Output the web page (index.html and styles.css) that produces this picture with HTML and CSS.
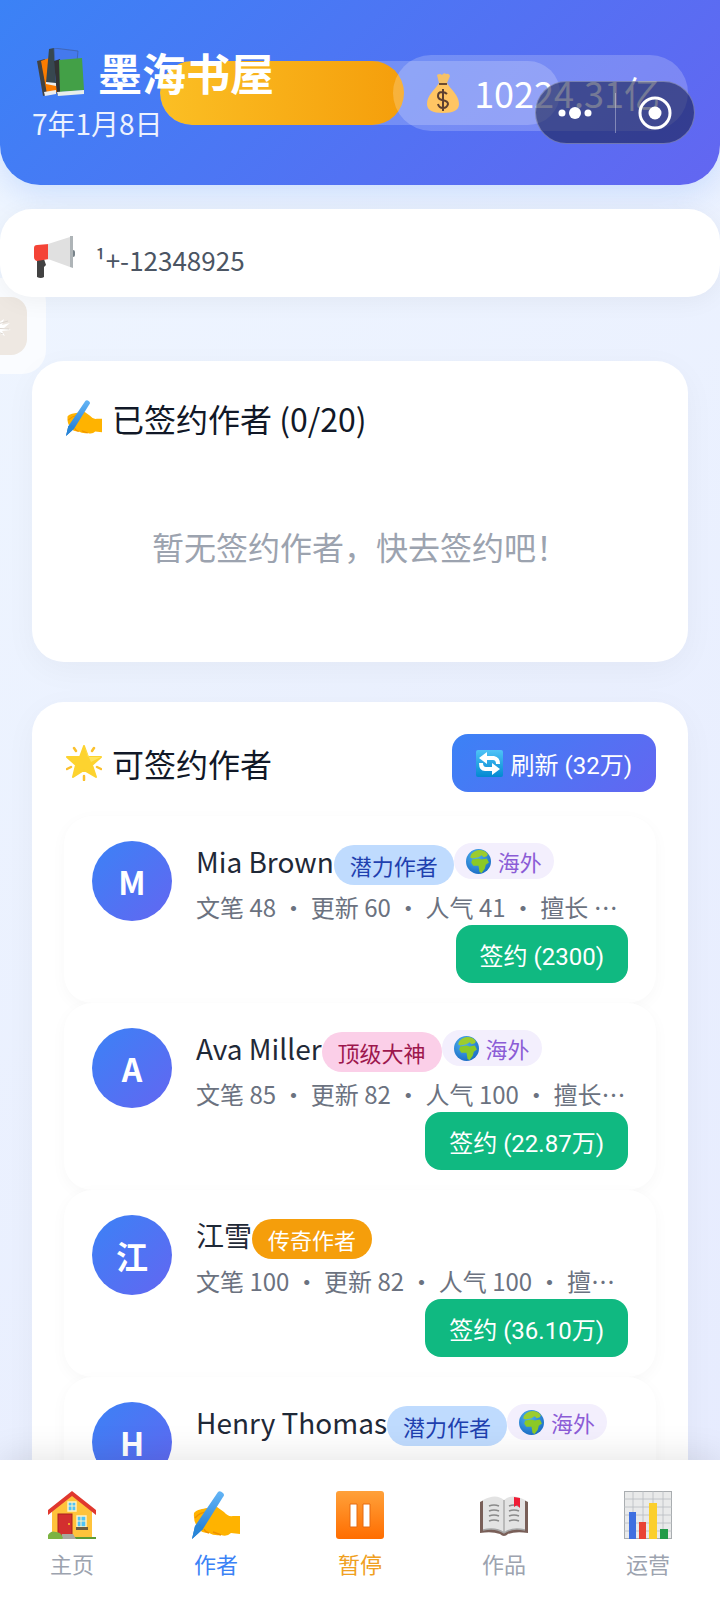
FILE: index.html
```html
<!DOCTYPE html>
<html lang="zh-CN">
<head>
    <meta charset="UTF-8">
    <meta name="viewport" content="width=device-width, initial-scale=1.0">
    <title>墨海书屋</title>
    <link rel="stylesheet" href="styles.css">
</head>
<body>
    <!-- shared icons -->
    <svg class="sprite" aria-hidden="true">
        <defs>
            <linearGradient id="gPen" x1="0" y1="0" x2="0" y2="1">
                <stop offset="0" stop-color="#64b5f6"/><stop offset="1" stop-color="#1976d2"/>
            </linearGradient>
            <linearGradient id="gBlue" x1="0" y1="0" x2="0" y2="1">
                <stop offset="0" stop-color="#4fc3f7"/><stop offset="1" stop-color="#0288d1"/>
            </linearGradient>
            <radialGradient id="gSea" cx="0.4" cy="0.3" r="0.8">
                <stop offset="0" stop-color="#4fb3f0"/><stop offset="1" stop-color="#1565c0"/>
            </radialGradient>
        </defs>
        <symbol id="hand" viewBox="0 0 48 48">
            <path d="M2 22C5 18 11 18 15 17L25 16L32 21Q36 26 41 25L48 25V43L39 42Q35 46 29 44Q22 45 17 42Q9 42 7 38Q1 32 2 22Z" fill="#ffb300"/>
            <path d="M3 27Q9 20 18 21M17 42Q13 41 12 38M29 44Q24 42 21 41" fill="none" stroke="#ef9100" stroke-width="1.4"/>
            <path d="M26 1Q28-1 31 2Q33 4 31 6L11 38L0 48L3 35Z" fill="url(#gPen)"/>
            <path d="M3 35L8 33L11 38L0 48Z" fill="#2986d8"/>
            <path d="M22 26L28 21L32 29Q26 35 17 33Z" fill="#ffb300"/>
        </symbol>
        <symbol id="earth" viewBox="0 0 24 24">
            <circle cx="12" cy="12" r="12" fill="url(#gSea)"/>
            <path d="M5 5Q9 1 13 1Q18 1 21 5L20 7L17 8L15 6L12 8L6 9L4 8Z" fill="#9ccc2e"/>
            <path d="M6 10L12 9L15 10L20 9L22 13L19 15L18 19L15 23L13 22L12 16L7 16L5 13Z" fill="#8bc926"/>
        </symbol>
    </svg>

    <div class="scroll">
        <header class="header">
            <div class="quota"><div class="quota_fill"></div></div>
            <div class="brand">
                <h1>
                    <svg class="icon_title" viewBox="0 0 48 48" aria-hidden="true">
                        <path d="M1 13L9 11L19 44L7 48Z" fill="#424242"/>
                        <path d="M5 13L13 10L22 44L11 46Z" fill="#fb7c00"/>
                        <path d="M13 1L18 0L20 35H10Z" fill="#37474f"/>
                        <path d="M18 0L42 3L41 14L20 34Z" fill="#4479ee" stroke="#3f5f9d" stroke-width="0.7"/>
                        <path d="M10 34L20 35V38L10 36ZM8 44L20 42V46L9 48Z" fill="#eee"/>
                        <path d="M18 13L24 11L26 43L21 47Z" fill="#333"/>
                        <path d="M23 12L46 10L48 42L24 44Z" fill="#43a047"/>
                        <path d="M21 44L48 42V46L22 48Z" fill="#e8eeea"/>
                    </svg>
                    墨海书屋
                </h1>
                <p class="date">7年1月8日</p>
            </div>
            <div class="money">
                <svg class="icon_money" viewBox="0 0 32 40" aria-hidden="true">
                    <path d="M10 2Q13 0 15 2Q17-1 19 1Q22 0 23 3L20 10H12Z" fill="#f5c168"/>
                    <path d="M12 10H20C24 17 32 22 32 31Q32 40 16 40Q0 40 0 31C0 22 8 17 12 10Z" fill="#ffc563"/>
                    <path d="M12 11H20" stroke="#6d4c2f" stroke-width="2"/>
                    <path d="M20 21Q18 19 15 19Q11 19 11 23Q11 26 15 27Q21 28 21 31Q20 35 16 35Q12 35 11 31M16 16V38" fill="none" stroke="#5d4030" stroke-width="2"/>
                </svg>
                <span>10224.31亿</span>
            </div>
            <div class="capsule">
                <button type="button" aria-label="更多">
                    <svg width="34" height="14" viewBox="0 0 34 14"><circle cx="4" cy="7" r="3.5" fill="#fff"/><circle cx="17" cy="7" r="6" fill="#fff"/><circle cx="30" cy="7" r="3.5" fill="#fff"/></svg>
                </button>
                <span class="capsule_line"></span>
                <button type="button" aria-label="关闭">
                    <svg width="34" height="34" viewBox="0 0 34 34"><circle cx="17" cy="17" r="15" fill="none" stroke="#fff" stroke-width="3"/><circle cx="17" cy="17" r="6.5" fill="#fff"/></svg>
                </button>
            </div>
        </header>

        <div class="notice">
            <svg class="icon_notice" viewBox="0 0 42 42" aria-hidden="true">
                <path d="M4 23H11L13 29L11 31V41Q8 43 4 41Z" fill="#424242"/>
                <rect x="37" y="14" width="5" height="7" rx="2" fill="#78838a"/>
                <path d="M1 12Q1 9 4 9L16 8V23L4 25Q1 24 1 21Z" fill="#f44336"/>
                <path d="M15 8L37 1V31L15 23Z" fill="#e0e0e0"/>
                <path d="M37 0L40 0V32L37 31Z" fill="#aeb4b7"/>
            </svg>
            <p class="notice_text">¹+-12348925</p>
        </div>
        <button type="button" class="float_btn" aria-label="活动">
            <span class="float_inner">
                <svg width="22" height="24" viewBox="0 0 22 24"><path d="M0 7L6 3L8 9L14 5L12 11L20 9L14 14L21 16L12 17L15 22L7 18L2 22L0 20Z" fill="#fff"/><path d="M1 12L18 7M2 14L19 15M5 17L13 20" stroke="#dcd6d0" fill="none"/></svg>
            </span>
        </button>

        <main>
            <section class="card">
                <h2><svg class="icon_card" aria-hidden="true"><use href="#hand"/></svg>已签约作者 (0/20)</h2>
                <p class="empty">暂无签约作者，快去签约吧！</p>
            </section>

            <section class="card">
                <div class="card_head">
                    <h2>
                        <svg class="icon_card" viewBox="0 0 36 36" aria-hidden="true">
                            <path d="M18 1L22 12L35 12L26 20L30 32L18 25L7 32L10 20L1 12L14 12Z" fill="#fdd32f" stroke="#fdd32f" stroke-width="2" stroke-linejoin="round"/>
                            <path d="M18 1L22 12L35 12L25 17Z" fill="#ffe45c"/>
                            <path d="M8 3L10 6M28 3L26 6M1 24L5 22M35 24L31 22M18 31V35" stroke="#fbc02d" stroke-width="2.5" stroke-linecap="round"/>
                        </svg>
                        可签约作者
                    </h2>
                    <button type="button" class="btn btn_refresh">
                        <svg class="icon_refresh" viewBox="0 0 27 27" aria-hidden="true">
                            <rect width="27" height="27" rx="2" fill="url(#gBlue)"/>
                            <path d="M3 8L11 2V6H18Q24 7 24 14H20Q20 10 17 10H11V14Z" fill="#fff"/>
                            <path d="M24 19L16 13V17H10Q7 17 7 13H3Q3 21 9 21H16V25Z" fill="#fff"/>
                        </svg>
                        刷新 (32万)
                    </button>
                </div>

                <article class="author">
                    <div class="avatar">M</div>
                    <div class="info">
                        <div class="name"><h3>Mia Brown</h3><span class="level potential">潜力作者</span><span class="oversea"><svg class="icon_earth" aria-hidden="true"><use href="#earth"/></svg>海外</span></div>
                        <p class="stats">文笔 48 ・ 更新 60 ・ 人气 41 ・ 擅长 ⋯</p>
                        <button type="button" class="btn btn_sign">签约 (2300)</button>
                    </div>
                </article>

                <article class="author">
                    <div class="avatar">A</div>
                    <div class="info">
                        <div class="name"><h3>Ava Miller</h3><span class="level top">顶级大神</span><span class="oversea"><svg class="icon_earth" aria-hidden="true"><use href="#earth"/></svg>海外</span></div>
                        <p class="stats">文笔 85 ・ 更新 82 ・ 人气 100 ・ 擅长⋯</p>
                        <button type="button" class="btn btn_sign">签约 (22.87万)</button>
                    </div>
                </article>

                <article class="author">
                    <div class="avatar">江</div>
                    <div class="info">
                        <div class="name"><h3>江雪</h3><span class="level legend">传奇作者</span></div>
                        <p class="stats">文笔 100 ・ 更新 82 ・ 人气 100 ・ 擅⋯</p>
                        <button type="button" class="btn btn_sign">签约 (36.10万)</button>
                    </div>
                </article>

                <article class="author">
                    <div class="avatar">H</div>
                    <div class="info">
                        <div class="name"><h3>Henry Thomas</h3><span class="level potential">潜力作者</span><span class="oversea"><svg class="icon_earth" aria-hidden="true"><use href="#earth"/></svg>海外</span></div>
                    </div>
                </article>
            </section>
        </main>
    </div>

    <nav class="tabbar">
        <a href="#home">
            <svg viewBox="0 0 48 48" aria-hidden="true">
                <path d="M4 20L24 3L44 20V47H4Z" fill="#ffc33b"/>
                <path d="M24 0L48 19V24L24 5L0 24V19Z" fill="#e0382e"/>
                <rect x="10" y="23" width="14" height="22" fill="#d32f2f" stroke="#a92020"/>
                <circle cx="21" cy="33" r="1" fill="#ffca28"/>
                <path d="M20 11H28V20H20ZM29 25H38V36H29Z" fill="#4fc3f7" stroke="#fff3c4" stroke-width="1.4"/>
                <path d="M24 11V20M20 15H28M33 25V36M29 30H38" stroke="#fff3c4"/>
                <path d="M28 36H40V39H28Z" fill="#6d5b3f"/>
                <path d="M0 46H48V48H0Z" fill="#5d9b34"/>
                <path d="M14 43H25L28 48H13Z" fill="#a8a8a0"/>
                <path d="M0 48V44Q3 39 8 41Q13 41 15 47L14 48Z" fill="#7cb342"/>
            </svg>
            主页
        </a>
        <a href="#authors" class="active">
            <svg aria-hidden="true"><use href="#hand"/></svg>
            作者
        </a>
        <a href="#pause" class="pause">
            <svg viewBox="0 0 48 48" aria-hidden="true">
                <defs><linearGradient id="gPause" x1="0" y1="0" x2="0" y2="1"><stop offset="0" stop-color="#ffa13a"/><stop offset="1" stop-color="#ff6d00"/></linearGradient></defs>
                <rect width="48" height="48" rx="3" fill="url(#gPause)"/>
                <path d="M14 13H21V36H14ZM27 13H34V36H27Z" fill="#fff" stroke="#e66a10"/>
            </svg>
            暂停
        </a>
        <a href="#works">
            <svg viewBox="0 0 48 48" aria-hidden="true">
                <path d="M0 11L4 9H44L48 11V42Q36 40 28 43Q24 47 20 43Q12 40 0 42Z" fill="#795f58"/>
                <path d="M3 9Q16 2 24 9Q32 2 45 9V39Q32 36 24 42Q16 36 3 39Z" fill="#e3e3e3"/>
                <path d="M3 39Q16 36 24 42Q32 36 45 39M24 9V41" fill="none" stroke="#a5a5a5" stroke-width="1.3"/>
                <path d="M9 15Q14 13 19 15M9 20Q14 18 19 20M9 25Q14 23 19 25M9 30Q14 28 19 30M29 15Q34 13 39 15M29 20Q34 18 39 20M29 25Q34 23 39 25M29 30Q34 28 39 30" fill="none" stroke="#8a8a8a" stroke-width="1.6"/>
                <path d="M34 6L40 7V17L37 14L34 16Z" fill="#f01c35"/>
            </svg>
            作品
        </a>
        <a href="#operate">
            <svg viewBox="0 0 48 48" aria-hidden="true">
                <rect width="48" height="48" fill="#e9eaea" stroke="#a9adb0" stroke-width="2"/>
                <path d="M9 0V48M19 0V48M29 0V48M39 0V48M0 8H48M0 16H48M0 24H48M0 32H48M0 40H48" stroke="#b8bdc1" stroke-width="0.8"/>
                <path d="M5 21H12V48H5Z" fill="#3f6fe0"/>
                <path d="M15 31H22V48H15Z" fill="#e94335"/>
                <path d="M25 12H33V48H25Z" fill="#fbcf2c"/>
                <path d="M36 38H44V48H36Z" fill="#219b48"/>
            </svg>
            运营
        </a>
    </nav>
</body>
</html>
```
FILE: styles.css
```css
* {
    box-sizing: border-box;
    margin: 0;
    padding: 0;
}
body {
    display: flex;
    flex-direction: column;
    height: 100vh;
    background: linear-gradient(135deg, #eff6ff, #e6ebfe);
    color: #1f2937;
    font-family: "Noto Sans CJK SC", sans-serif;
    font-size: 28px;
}
h1, h2 {
    display: flex;
    align-items: center;
}
button {
    border: none;
    background: none;
    font-family: Roboto, "Noto Sans CJK SC", sans-serif;
    cursor: pointer;
}
svg {
    flex: none;
}
.sprite {
    position: absolute;
    width: 0;
    height: 0;
}
.scroll {
    flex: 1;
    min-height: 0;
    position: relative;
    overflow: hidden auto;
    scrollbar-width: none;
}

/* header */
.header {
    position: relative;
    display: flex;
    align-items: center;
    justify-content: space-between;
    padding: 43px 32px 42px;
    border-radius: 0 0 40px 40px;
    background: linear-gradient(135deg, #3b82f6, #6366f1);
    box-shadow: 0 8px 32px rgba(59, 130, 246, 0.2);
    color: #fff;
}
.brand {
    position: relative;
}
.brand h1 {
    gap: 14px;
    padding-left: 4px;
    font-size: 44px;
    line-height: 58px;
}
.icon_title {
    width: 48px;
    height: 48px;
}
.date {
    margin-top: 2px;
    line-height: 40px;
    opacity: 0.9;
}
.quota {
    position: absolute;
    left: 160px;
    top: 61px;
    width: 400px;
    height: 64px;
    border-radius: 32px;
    background: rgba(255, 255, 255, 0.2);
    overflow: hidden;
}
.quota_fill {
    width: 61%;
    height: 100%;
    border-radius: 32px;
    background: linear-gradient(90deg, #fbbf24, #f59e0b);
}
.money {
    position: relative;
    display: flex;
    align-items: center;
    gap: 15px;
    padding: 12px 28px 12px 34px;
    border-radius: 40px;
    background: rgba(255, 255, 255, 0.2);
    font-size: 36px;
    line-height: 52px;
}
.money span {
    padding-bottom: 2px;
    line-height: 50px;
}
.icon_money {
    width: 32px;
    height: 40px;
}
.capsule {
    position: absolute;
    right: 25px;
    top: 81px;
    display: flex;
    align-items: center;
    width: 160px;
    height: 63px;
    border: 1px solid rgba(255, 255, 255, 0.3);
    border-radius: 32px;
    background: rgba(24, 32, 80, 0.6);
}
.capsule button {
    flex: 1;
    display: flex;
    align-items: center;
    justify-content: center;
}
.capsule_line {
    width: 1px;
    height: 40px;
    background: rgba(255, 255, 255, 0.35);
}

/* notice */
.notice {
    position: relative;
    z-index: 2;
    display: flex;
    align-items: center;
    gap: 20px;
    height: 88px;
    margin-top: 24px;
    padding: 8px 33px 0;
    border-radius: 32px;
    background: #fff;
    box-shadow: 0 4px 24px rgba(0, 0, 0, 0.05);
}
.icon_notice {
    width: 42px;
    height: 42px;
}
.notice_text {
    padding-top: 4px;
    color: #4b5563;
    font-size: 26px;
}
.float_btn {
    position: absolute;
    left: 0;
    top: 278px;
    display: flex;
    align-items: center;
    width: 46px;
    height: 96px;
    border-radius: 0 24px 24px 0;
    background: rgba(255, 255, 255, 0.7);
}
.float_inner {
    display: flex;
    align-items: center;
    width: 27px;
    height: 58px;
    border-radius: 0 16px 16px 0;
    background: #eee8e2;
}
.float_inner svg {
    margin-left: -10px;
}

/* cards */
main {
    position: relative;
    display: flex;
    flex-direction: column;
    gap: 40px;
    padding: 64px 32px;
}
.card {
    padding: 32px;
    border-radius: 32px;
    background: #fff;
    box-shadow: 0 8px 32px rgba(0, 0, 0, 0.04);
}
.card h2 {
    gap: 10px;
    padding-left: 2px;
    color: #111827;
    font-size: 32px;
    font-weight: 400;
    line-height: 50px;
}
.icon_card {
    width: 36px;
    height: 36px;
}
.empty {
    padding: 79px 0 60px;
    color: #9ca3af;
    font-size: 32px;
    line-height: 48px;
    text-align: center;
}
.card_head {
    display: flex;
    align-items: center;
    justify-content: space-between;
    margin-bottom: 24px;
}
.btn {
    display: flex;
    align-items: center;
    gap: 8px;
    height: 58px;
    padding: 0 24px;
    border-radius: 16px;
    color: #fff;
    font-size: 24px;
}
.btn_refresh {
    background: linear-gradient(135deg, #3b82f6, #6366f1);
}
.icon_refresh {
    width: 27px;
    height: 27px;
}
.btn_sign {
    align-self: flex-end;
    background: #10b981;
}

/* authors */
.author {
    display: flex;
    gap: 24px;
    padding: 25px 28px 20px;
    border-radius: 28px;
    background: #fff;
    box-shadow: 0 4px 16px rgba(0, 0, 0, 0.03);
}
.avatar {
    flex: none;
    display: flex;
    align-items: center;
    justify-content: center;
    width: 80px;
    height: 80px;
    border-radius: 50%;
    background: linear-gradient(135deg, #3b82f6, #6366f1);
    color: #fff;
    font-size: 32px;
    font-weight: 700;
}
.info {
    flex: 1;
    min-width: 0;
    display: flex;
    flex-direction: column;
}
.name {
    display: flex;
    align-items: center;
    height: 44px;
    white-space: nowrap;
}
.name h3 {
    padding-bottom: 4px;
    font-size: 28px;
    font-weight: 400;
    line-height: 40px;
}
.level {
    margin-top: 4px;
    padding: 0 16px;
    border-radius: 20px;
    font-size: 22px;
    line-height: 40px;
}
.potential {
    background: #bfdbfe;
    color: #1e40af;
}
.top {
    background: #fbcfe8;
    color: #9d174d;
}
.legend {
    background: #f59e0b;
    color: #fff;
}
.oversea {
    display: flex;
    align-items: center;
    gap: 7px;
    margin-bottom: 4px;
    padding: 0 12px;
    border-radius: 18px;
    background: #f3effd;
    color: #8b5cd6;
    font-size: 22px;
    line-height: 36px;
}
.icon_earth {
    width: 25px;
    height: 25px;
}
.stats {
    height: 40px;
    overflow: hidden;
    color: #6b7280;
    font-size: 24px;
    line-height: 44px;
    white-space: nowrap;
}

/* bottom tabs */
.tabbar {
    position: relative;
    display: flex;
    padding: 31px 0 20px;
    background: #fff;
    box-shadow: 0 -4px 32px rgba(0, 0, 0, 0.1);
}
.tabbar a {
    flex: 1;
    display: flex;
    flex-direction: column;
    align-items: center;
    gap: 7px;
    color: #9ca3af;
    font-size: 22px;
    line-height: 34px;
    text-decoration: none;
}
.tabbar svg {
    width: 48px;
    height: 48px;
}
.tabbar .active {
    color: #3b82f6;
}
.tabbar .pause {
    color: #f0a020;
}
```
